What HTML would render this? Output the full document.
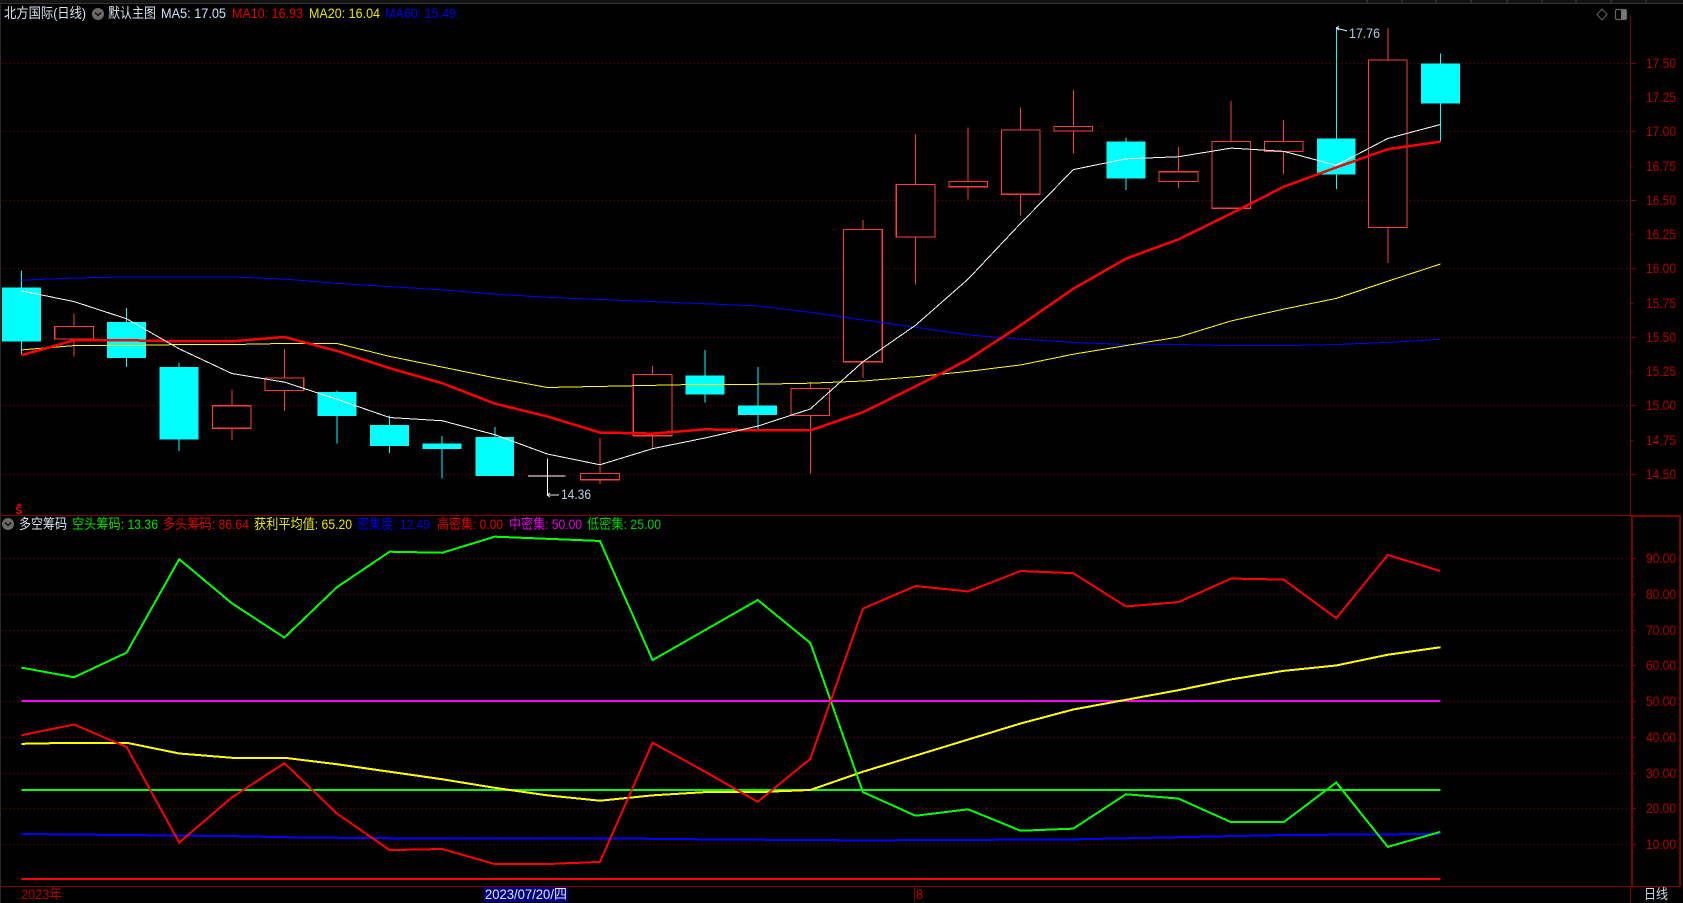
<!DOCTYPE html>
<html lang="zh-CN">
<head>
<meta charset="utf-8">
<title>北方国际 (日线)</title>
<style>
html,body{margin:0;padding:0;background:#000;width:1683px;height:903px;overflow:hidden}
svg{display:block;position:absolute;left:0;top:0}
text{font-family:"Liberation Sans","Noto Sans CJK SC",sans-serif;font-size:14px;white-space:pre}
.ax{fill:#b30000}
.ln{fill:none;vector-effect:non-scaling-stroke;stroke-linejoin:miter}
.cw{fill:#0ff;stroke:none}
.cl{stroke:#0ff;stroke-width:1;vector-effect:non-scaling-stroke;fill:none}
.rw{stroke:#ff3c3c;stroke-width:1;vector-effect:non-scaling-stroke;fill:none}
.rb{fill:#000;stroke:#ff3c3c;stroke-width:1;vector-effect:non-scaling-stroke}
</style>
</head>
<body>
<svg width="1683" height="903" viewBox="0 0 1683 903" xmlns="http://www.w3.org/2000/svg">
<rect width="1683" height="903" fill="#000"/>
<!-- top strip -->
<rect x="0" y="0" width="1683" height="3" fill="#141414"/>
<rect x="0" y="3" width="1683" height="1" fill="#333"/>
<path d="M1367 0V3M1402 0V3M1436 0V3M1471 0V3M1507 0V3M1542 0V3M1576 0V3M1611 0V3M1646 0V3" stroke="#444" shape-rendering="crispEdges"/>
<rect x="0" y="3" width="1" height="900" fill="#2a2a2a"/>

<!-- grid -->
<g stroke="#8a0000" stroke-width="1" stroke-dasharray="1 3" shape-rendering="crispEdges" fill="none">
<path d="M2 63.5H1630M2 131.5H1630M2 200.5H1630M2 268.5H1630M2 337.5H1630M2 405.5H1630M2 474.5H1630"/>
<path d="M2 558.5H1630M2 594.5H1630M2 630.5H1630M2 665.5H1630M2 701.5H1630M2 737.5H1630M2 773.5H1630M2 808.5H1630M2 844.5H1630"/>
</g>

<!-- candles -->
<g transform="scale(1.07334)" shape-rendering="crispEdges">
<path class="cl" d="M20 252V330M118 287V342M167 338V420M314 364V413M363 387V422M412 406V446M461 398V443M657 326V375M706 342V400M1049 128V177M1245 25V176M1342 50V132"/>
<path class="rw" d="M69 292V332M216 363V410M265 325V383M559 408V451M608 341V417M755 356V441M804 205V352M853 125V265M902 119V186M951 100V201M1000 84V143M1098 137V175M1147 94V194M1196 112V162M1293 26V245"/>
<g class="cw">
<rect x="1.8" y="268" width="36.3" height="50"/>
<rect x="99.8" y="300" width="36.3" height="33.5"/>
<rect x="148.8" y="342" width="36.3" height="67.5"/>
<rect x="295.8" y="365" width="36.3" height="22.5"/>
<rect x="344.8" y="396" width="36.3" height="19.5"/>
<rect x="393.8" y="413" width="36.3" height="5.500"/>
<rect x="442.8" y="407" width="36.3" height="36.5"/>
<rect x="638.8" y="350" width="36.3" height="17.5"/>
<rect x="687.8" y="378" width="36.3" height="8.500"/>
<rect x="1030.8" y="132" width="36.3" height="34.5"/>
<rect x="1226.8" y="129" width="36.3" height="33.5"/>
<rect x="1323.8" y="59" width="36.3" height="37.5"/>
</g>
<g class="rb">
<rect x="51" y="304" width="36" height="12"/>
<rect x="198" y="378" width="36" height="21"/>
<rect x="247" y="352" width="36" height="12"/>
<rect x="541" y="441" width="36" height="6"/>
<rect x="590" y="349" width="36" height="57"/>
<rect x="737" y="362" width="36" height="25"/>
<rect x="786" y="214" width="36" height="123"/>
<rect x="835" y="172" width="36" height="49"/>
<rect x="884" y="169" width="36" height="5"/>
<rect x="933" y="121" width="36" height="60"/>
<rect x="982" y="118" width="36" height="4"/>
<rect x="1080" y="160" width="36" height="9"/>
<rect x="1129" y="132" width="36" height="62"/>
<rect x="1178" y="132" width="36" height="9"/>
<rect x="1275" y="56" width="36" height="156"/>
</g>
<path class="ln" stroke="#fff" stroke-width="1" d="M492 443.500H527M510 427V462"/>
</g>

<!-- MA lines -->
<g transform="scale(1.07334)" shape-rendering="crispEdges">
<polyline class="ln" stroke="#0000ff" stroke-width="1" points="20,261 69,259 118,258 167,258 216,258 265,260 314,264 363,267 412,270 461,274 510,277 559,279 608,281 657,283 706,285 755,291 804,298 853,305 902,312 951,316 1000,319 1049,321 1098,321 1147,322 1196,322 1245,321 1293,319 1342,316"/>
<polyline class="ln" stroke="#ffff00" stroke-width="1" points="20,326 69,322 118,322 167,321 216,321 265,320 314,320 363,332 412,342 461,352 510,361 559,360 608,359 657,358 706,358 755,357 804,355 853,351 902,346 951,340 1000,330 1049,322 1098,314 1147,299 1196,288 1245,278 1293,262 1342,246"/>
<polyline class="ln" stroke="#ff0000" stroke-width="2.5" points="20,331 69,317 118,317 167,318 216,318 265,314 314,327 363,343 412,357 461,376 510,388 559,403 608,404 657,400 706,401 755,401 804,384 853,360 902,335 951,303 1000,269 1049,241 1098,223 1147,199 1196,174 1245,156 1293,139 1342,132"/>
<polyline class="ln" stroke="#ffffff" stroke-width="1" points="20,271 69,281 118,297 167,325 216,348 265,356 314,372 363,389 412,392 461,405 510,423 559,433 608,418 657,408 706,397 755,381 804,337 853,303 902,260 951,208 1000,158 1049,148 1098,146 1147,138 1196,141 1245,154 1293,129 1342,116"/>
</g>

<!-- lower pane lines -->
<g transform="scale(1.07334)" shape-rendering="crispEdges">
<path class="ln" stroke="#ff00ff" stroke-width="2" d="M20 653H1342"/>
<path class="ln" stroke="#00ff00" stroke-width="2" d="M20 736H1342"/>
<path class="ln" stroke="#ff0000" stroke-width="2" d="M20 819H1342"/>
<polyline class="ln" stroke="#0000ff" stroke-width="2" points="20,777 118,778 216,779 265,780 363,781 559,781 657,782 804,783 1000,782 1098,780 1196,778 1342,777"/>
<polyline class="ln" stroke="#ffff00" stroke-width="2" points="20,693 69,692 118,692 167,702 216,706 265,706 314,712 363,719 412,726 461,734 510,741 559,746 608,741 657,738 706,738 755,736 804,719 853,704 902,689 951,674 1000,661 1049,652 1098,643 1147,633 1196,625 1245,620 1293,610 1342,603"/>
<polyline class="ln" stroke="#00ff00" stroke-width="2" points="20,622 69,631 118,608 167,521 216,562 265,594 314,547 363,514 412,515 461,500 510,502 559,504 608,615 657,587 706,559 755,599 804,738 853,760 902,754 951,774 1000,772 1049,740 1098,744 1147,766 1196,766 1245,729 1293,789 1342,775"/>
<polyline class="ln" stroke="#ff0000" stroke-width="2" points="20,685 69,675 118,696 167,785 216,743 265,711 314,758 363,792 412,791 461,805 510,805 559,803 608,692 657,719 706,747 755,707 804,567 853,546 902,551 951,532 1000,534 1049,565 1098,561 1147,539 1196,540 1245,576 1293,517 1342,532"/>
</g>

<!-- frame / axes -->
<g fill="#800000" shape-rendering="crispEdges">
<rect x="1630" y="15" width="1" height="500"/>
<rect x="0" y="515" width="1631" height="1"/>
<rect x="1630" y="515" width="51" height="2"/>
<rect x="1631" y="515" width="2" height="371"/>
<rect x="1679" y="515" width="2" height="372"/>
<rect x="0" y="886" width="1681" height="1"/>
<rect x="1630" y="886" width="1" height="17"/>
<rect x="914" y="887" width="1" height="15"/>
</g>
<!-- ticks -->
<g stroke="#800000" shape-rendering="crispEdges">
<path d="M1631 63.500H1636M1631 97.500H1633M1631 131.500H1636M1631 166.500H1633M1631 200.500H1636M1631 234.500H1633M1631 268.500H1636M1631 303.500H1633M1631 337.500H1636M1631 371.500H1633M1631 405.500H1636M1631 440.500H1633M1631 474.500H1636"/>
<path d="M1633 558.500H1636M1633 576.500H1634M1633 594.500H1636M1633 612.500H1634M1633 630.500H1636M1633 647.500H1634M1633 665.500H1636M1633 683.500H1634M1633 701.500H1636M1633 719.500H1634M1633 737.500H1636M1633 755.500H1634M1633 773.500H1636M1633 790.500H1634M1633 808.500H1636M1633 826.500H1634M1633 844.500H1636"/>
</g>

<!-- axis labels top -->
<g class="ax">
<text x="1646" y="68" textLength="30" lengthAdjust="spacingAndGlyphs">17.50</text>
<text x="1646" y="102" textLength="30" lengthAdjust="spacingAndGlyphs">17.25</text>
<text x="1646" y="136" textLength="30" lengthAdjust="spacingAndGlyphs">17.00</text>
<text x="1646" y="171" textLength="30" lengthAdjust="spacingAndGlyphs">16.75</text>
<text x="1646" y="205" textLength="30" lengthAdjust="spacingAndGlyphs">16.50</text>
<text x="1646" y="239" textLength="30" lengthAdjust="spacingAndGlyphs">16.25</text>
<text x="1646" y="273" textLength="30" lengthAdjust="spacingAndGlyphs">16.00</text>
<text x="1646" y="308" textLength="30" lengthAdjust="spacingAndGlyphs">15.75</text>
<text x="1646" y="342" textLength="30" lengthAdjust="spacingAndGlyphs">15.50</text>
<text x="1646" y="376" textLength="30" lengthAdjust="spacingAndGlyphs">15.25</text>
<text x="1646" y="410" textLength="30" lengthAdjust="spacingAndGlyphs">15.00</text>
<text x="1646" y="445" textLength="30" lengthAdjust="spacingAndGlyphs">14.75</text>
<text x="1646" y="479" textLength="30" lengthAdjust="spacingAndGlyphs">14.50</text>
<text x="1646" y="563" textLength="30" lengthAdjust="spacingAndGlyphs">90.00</text>
<text x="1646" y="599" textLength="30" lengthAdjust="spacingAndGlyphs">80.00</text>
<text x="1646" y="635" textLength="30" lengthAdjust="spacingAndGlyphs">70.00</text>
<text x="1646" y="670" textLength="30" lengthAdjust="spacingAndGlyphs">60.00</text>
<text x="1646" y="706" textLength="30" lengthAdjust="spacingAndGlyphs">50.00</text>
<text x="1646" y="742" textLength="30" lengthAdjust="spacingAndGlyphs">40.00</text>
<text x="1646" y="778" textLength="30" lengthAdjust="spacingAndGlyphs">30.00</text>
<text x="1646" y="813" textLength="30" lengthAdjust="spacingAndGlyphs">20.00</text>
<text x="1646" y="849" textLength="30" lengthAdjust="spacingAndGlyphs">10.00</text>
</g>

<!-- top legend -->
<text x="4" y="18" fill="#d8e4f0" textLength="82" lengthAdjust="spacingAndGlyphs">北方国际(日线)</text>
<circle cx="98" cy="14" r="6" fill="#6a6a6a"/>
<path d="M95 12.500L98 15.500L101 12.500" stroke="#111" stroke-width="1.500" fill="none"/>
<text x="108" y="18" fill="#d8e4f0" textLength="48" lengthAdjust="spacingAndGlyphs">默认主图</text>
<text x="161" y="18" fill="#d0e4ff" textLength="65" lengthAdjust="spacingAndGlyphs">MA5: 17.05</text>
<text x="232" y="18" fill="#e00000" textLength="71" lengthAdjust="spacingAndGlyphs">MA10: 16.93</text>
<text x="309" y="18" fill="#e8e800" textLength="71" lengthAdjust="spacingAndGlyphs">MA20: 16.04</text>
<text x="385" y="18" fill="#0000f0" textLength="71" lengthAdjust="spacingAndGlyphs">MA60: 15.49</text>

<!-- top right icons -->
<path d="M1602 9L1607 14.500L1602 20L1597 14.500Z" fill="none" stroke="#666" stroke-width="1"/>
<rect x="1615.500" y="9.500" width="11" height="10" rx="1.500" fill="none" stroke="#666" stroke-width="1.200"/>
<rect x="1621" y="10" width="5" height="9" fill="#777"/>

<!-- price annotations -->
<path d="M1336 28L1347 31M1336 28L1339 26.500M1336 28L1339 30" stroke="#e8e8e8" stroke-width="1" fill="none"/>
<text x="1349" y="38" fill="#b8cce0" textLength="31" lengthAdjust="spacingAndGlyphs">17.76</text>
<path d="M547 495H559M547 495L550 493M547 495L550 497" stroke="#e8e8e8" stroke-width="1" fill="none"/>
<text x="561" y="499" fill="#b8cce0" textLength="30" lengthAdjust="spacingAndGlyphs">14.36</text>

<!-- S marker -->
<path d="M19 503L16.500 506H21.500Z" fill="#e00000"/>
<text x="15.500" y="514" fill="#f00000" style="font-size:11px;font-weight:bold" textLength="7" lengthAdjust="spacingAndGlyphs">S</text>

<!-- lower legend -->
<circle cx="8" cy="524" r="6" fill="#6a6a6a"/>
<path d="M5 522.500L8 525.500L11 522.500" stroke="#111" stroke-width="1.500" fill="none"/>
<text x="19" y="529" fill="#d8e4f0" textLength="48" lengthAdjust="spacingAndGlyphs">多空筹码</text>
<text x="72" y="529" fill="#00e000" textLength="86" lengthAdjust="spacingAndGlyphs">空头筹码: 13.36</text>
<text x="163" y="529" fill="#e00000" textLength="86" lengthAdjust="spacingAndGlyphs">多头筹码: 86.64</text>
<text x="254" y="529" fill="#e8e800" textLength="98" lengthAdjust="spacingAndGlyphs">获利平均值: 65.20</text>
<text x="357" y="529" fill="#0000e0" textLength="73" lengthAdjust="spacingAndGlyphs">密集度: 12.49</text>
<text x="437" y="529" fill="#e00000" textLength="66" lengthAdjust="spacingAndGlyphs">高密集: 0.00</text>
<text x="509" y="529" fill="#e800e8" textLength="73" lengthAdjust="spacingAndGlyphs">中密集: 50.00</text>
<text x="587" y="529" fill="#00d000" textLength="74" lengthAdjust="spacingAndGlyphs">低密集: 25.00</text>

<!-- bottom axis -->
<text x="21" y="899" fill="#b30000" textLength="41" lengthAdjust="spacingAndGlyphs">2023年</text>
<rect x="484" y="887" width="84" height="15" fill="#00007a"/>
<text x="485" y="899" fill="#e0e8ff" textLength="82" lengthAdjust="spacingAndGlyphs">2023/07/20/四</text>
<text x="916" y="899" fill="#c80000" textLength="7" lengthAdjust="spacingAndGlyphs">8</text>
<text x="1644" y="899" fill="#c8d8e8" textLength="24" lengthAdjust="spacingAndGlyphs">日线</text>
</svg>
</body>
</html>
